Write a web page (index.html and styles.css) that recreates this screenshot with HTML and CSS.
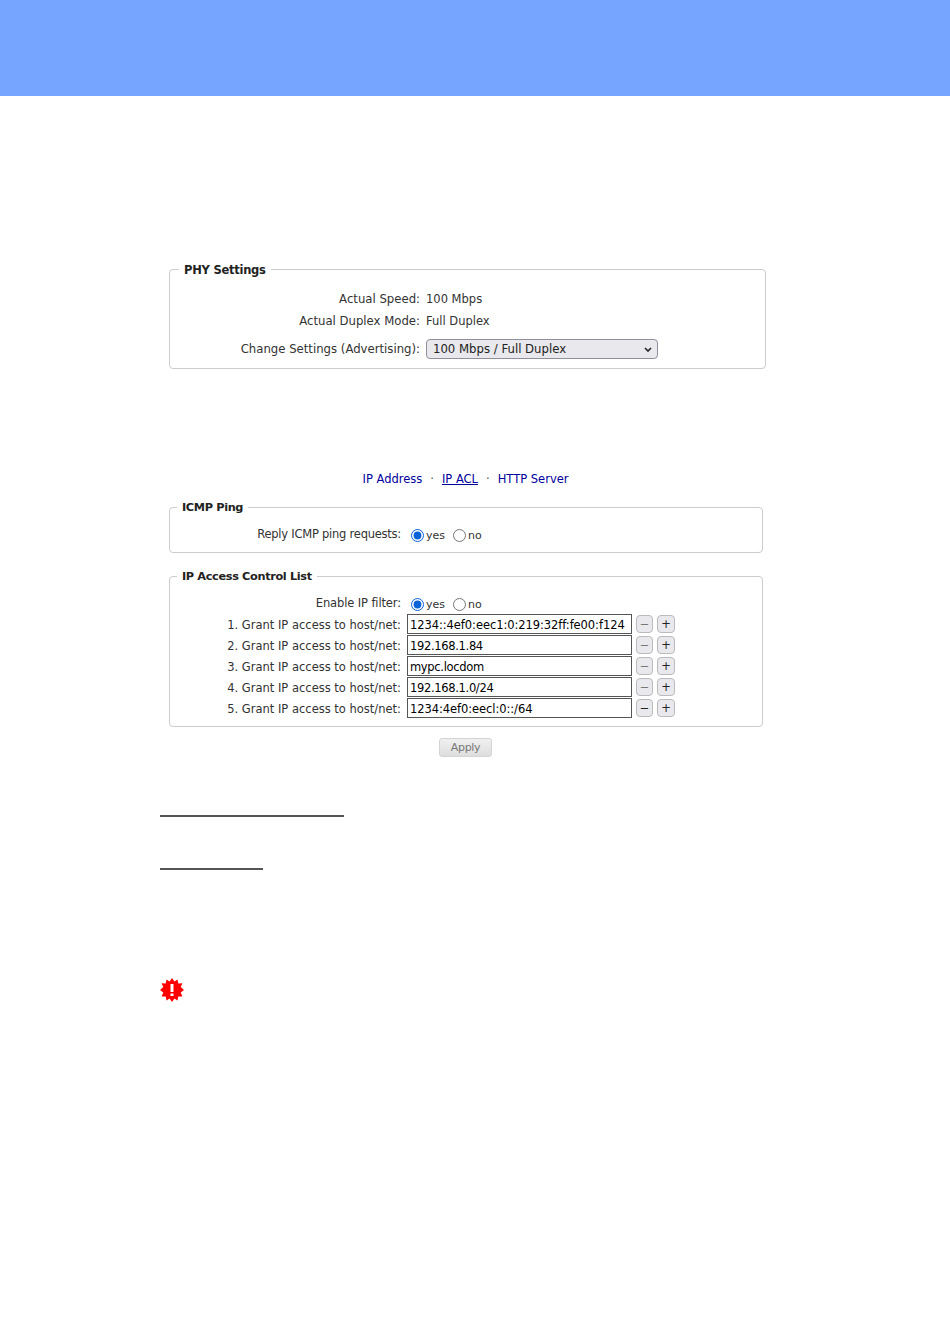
FILE: index.html
```html
<!DOCTYPE html>
<html lang="en">
<head>
    <meta charset="UTF-8">
    <title>PHY Settings and IP ACL</title>
    <link rel="stylesheet" href="styles.css">
</head>
<body>
    <header class="top-band"></header>

    <main class="page">
        <fieldset class="panel phy-panel">
            <legend>PHY Settings</legend>
            <div class="phy-row">
                <span class="phy-label">Actual Speed:</span>
                <span>100 Mbps</span>
            </div>
            <div class="phy-row">
                <span class="phy-label">Actual Duplex Mode:</span>
                <span>Full Duplex</span>
            </div>
            <div class="phy-row phy-row-select">
                <span class="phy-label">Change Settings (Advertising):</span>
                <div class="select-wrap">
                    <select class="phy-select">
                        <option>100 Mbps / Full Duplex</option>
                    </select>
                    <svg class="select-arrow" width="8" height="5" viewBox="0 0 8 5">
                        <path d="M1 1l3 3 3-3" fill="none" stroke="#222" stroke-width="1.6"/>
                    </svg>
                </div>
            </div>
        </fieldset>

        <nav class="sub-nav">
            <a href="#ip">IP Address</a>
            <span class="dot">&middot;</span>
            <a href="#acl" class="current">IP ACL</a>
            <span class="dot">&middot;</span>
            <a href="#http">HTTP Server</a>
        </nav>

        <fieldset class="panel net-panel icmp-panel">
            <legend>ICMP Ping</legend>
            <div class="net-row">
                <span class="net-label net-label-short">Reply ICMP ping requests:</span>
                <label class="choice"><input type="radio" name="icmp" checked>yes</label>
                <label class="choice"><input type="radio" name="icmp">no</label>
            </div>
        </fieldset>

        <fieldset class="panel net-panel acl-panel">
            <legend>IP Access Control List</legend>
            <div class="net-row filter-row">
                <span class="net-label net-label-filter">Enable IP filter:</span>
                <label class="choice"><input type="radio" name="filter" checked>yes</label>
                <label class="choice"><input type="radio" name="filter">no</label>
            </div>
            <div class="net-row host-row">
                <span class="net-label">1. Grant IP access to host/net:</span>
                <input class="host-input host-v6" type="text" value="1234::4ef0:eec1:0:219:32ff:fe00:f124">
                <button class="step" disabled>&minus;</button>
                <button class="step">+</button>
            </div>
            <div class="net-row host-row">
                <span class="net-label">2. Grant IP access to host/net:</span>
                <input class="host-input" type="text" value="192.168.1.84">
                <button class="step" disabled>&minus;</button>
                <button class="step">+</button>
            </div>
            <div class="net-row host-row">
                <span class="net-label">3. Grant IP access to host/net:</span>
                <input class="host-input" type="text" value="mypc.locdom">
                <button class="step" disabled>&minus;</button>
                <button class="step">+</button>
            </div>
            <div class="net-row host-row">
                <span class="net-label">4. Grant IP access to host/net:</span>
                <input class="host-input" type="text" value="192.168.1.0/24">
                <button class="step" disabled>&minus;</button>
                <button class="step">+</button>
            </div>
            <div class="net-row host-row">
                <span class="net-label">5. Grant IP access to host/net:</span>
                <input class="host-input host-v6" type="text" value="1234:4ef0:eecl:0::/64">
                <button class="step">&minus;</button>
                <button class="step">+</button>
            </div>
        </fieldset>

        <div class="apply-row">
            <button class="apply" disabled>Apply</button>
        </div>

        <div class="rule rule-long"></div>
        <div class="rule rule-short"></div>

        <svg class="warn-icon" width="24" height="24" viewBox="0 0 24 24">
            <polygon fill="#fe0000" points="12,0 14.4,3.5 17.5,1.5 18.3,5.6 22.4,5.2 20.7,9 24,12 20.7,14.4 22.4,18.6 18.3,18.4 17.5,22.5 14.4,20.5 12,24 9.6,20.5 6.5,22.5 5.7,18.4 1.6,18.6 3.3,14.4 0,12 3.3,9 1.6,5.2 5.7,5.6 6.5,1.5 9.6,3.5"/>
            <rect x="10.5" y="6" width="3" height="8" fill="#fff"/>
            <rect x="10.5" y="15.5" width="3" height="2.5" fill="#fff"/>
        </svg>
    </main>
</body>
</html>
```

FILE: styles.css
```css
/* Base */
* {
    box-sizing: border-box;
}

body {
    margin: 0;
    background: #fff;
    color: #333;
    font-family: "DejaVu Sans", sans-serif;
    font-size: 11.5px;
}

.top-band {
    height: 96px;
    background: #75a5ff;
}

.page {
    padding: 165px 0 0 160px;
    width: 800px;
}

/* Panels */
.panel {
    margin: 0 0 0 9px;
    padding: 0;
    border: 1px solid #ccc;
    border-radius: 4px;
}

.panel legend {
    margin-left: 7px;
    padding: 2px 5px 0;
    font-size: 11.3px;
    font-weight: bold;
    letter-spacing: -0.35px;
    line-height: 14px;
    color: #222;
}

/* PHY settings */
.phy-panel {
    width: 597px;
    height: 108px;
    padding-top: 11px;
}

.phy-panel legend {
    margin-left: 9px;
    font-size: 11.5px;
    letter-spacing: -0.25px;
}

.phy-row {
    display: flex;
    align-items: center;
    height: 22px;
}

.phy-label {
    width: 250px;
    margin-right: 6px;
    font-size: 11.7px;
    text-align: right;
}

.phy-row-select {
    height: 24px;
    margin-top: 5px;
}

.select-wrap {
    position: relative;
    display: flex;
}

.phy-select {
    width: 232px;
    height: 20px;
    padding: 0 6px;
    border: 1px solid #8f8f9d;
    border-radius: 4px;
    background: #e9e9ed;
    color: #222;
    font: inherit;
    font-size: 11.7px;
    appearance: none;
}

.select-arrow {
    position: absolute;
    top: 8px;
    right: 6px;
}

/* Sub navigation */
.sub-nav {
    display: flex;
    justify-content: center;
    gap: 8px;
    width: 611px;
    margin: 103px 0 0;
}

.sub-nav a {
    color: #00009c;
    text-decoration: none;
}

.sub-nav a.current {
    text-decoration: underline;
}

.sub-nav .dot {
    color: #555;
}

/* ICMP and ACL */
.net-panel {
    width: 594px;
}

.icmp-panel {
    height: 54px;
    margin-top: 13px;
    padding-top: 9px;
}

.acl-panel {
    height: 159px;
    margin-top: 15px;
    padding-top: 9px;
}

.net-row {
    display: flex;
    align-items: center;
    height: 21px;
}

.net-label {
    width: 231px;
    margin-right: 6px;
    text-align: right;
}

.net-label-short {
    padding-bottom: 2px;
    letter-spacing: -0.24px;
}

.net-label-filter {
    letter-spacing: -0.12px;
}

.host-row .net-label {
    padding-top: 2px;
}

.filter-row {
    height: 20px;
}

.choice {
    display: flex;
    align-items: center;
    margin-right: 4px;
    padding-top: 2px;
    font-size: 11px;
}

.choice input {
    width: 13px;
    height: 13px;
    margin: 0 2px 0 4px;
    accent-color: #0a62d8;
}

.host-input {
    width: 225px;
    height: 20px;
    margin-right: 4px;
    padding: 2px 2px 0;
    border: 1px solid #555;
    color: #000;
    font: inherit;
    letter-spacing: -0.33px;
}

.host-v6 {
    letter-spacing: -0.07px;
}

.step {
    width: 17px;
    height: 18px;
    margin: 1px 4px 0 0;
    padding: 0;
    border: 1px solid #bbb;
    border-radius: 4px;
    background: #e9e9ed;
    color: #222;
    font: inherit;
}

.step + .step {
    width: 18px;
}

.step:disabled {
    color: #777;
}

/* Apply */
.apply-row {
    width: 611px;
    margin-top: 11px;
    text-align: center;
}

.apply {
    width: 53px;
    height: 19px;
    padding: 0;
    border: 1px solid #d4d4d4;
    border-radius: 3px;
    background: linear-gradient(#f0f0f0, #dedede);
    color: #777;
    font: inherit;
    font-size: 11px;
    letter-spacing: -0.3px;
}

/* Empty heading rules */
.rule {
    height: 2px;
    background: #555;
}

.rule-long {
    width: 184px;
    margin-top: 58px;
}

.rule-short {
    width: 103px;
    margin-top: 51px;
}

.warn-icon {
    display: block;
    margin-top: 108px;
}
```
